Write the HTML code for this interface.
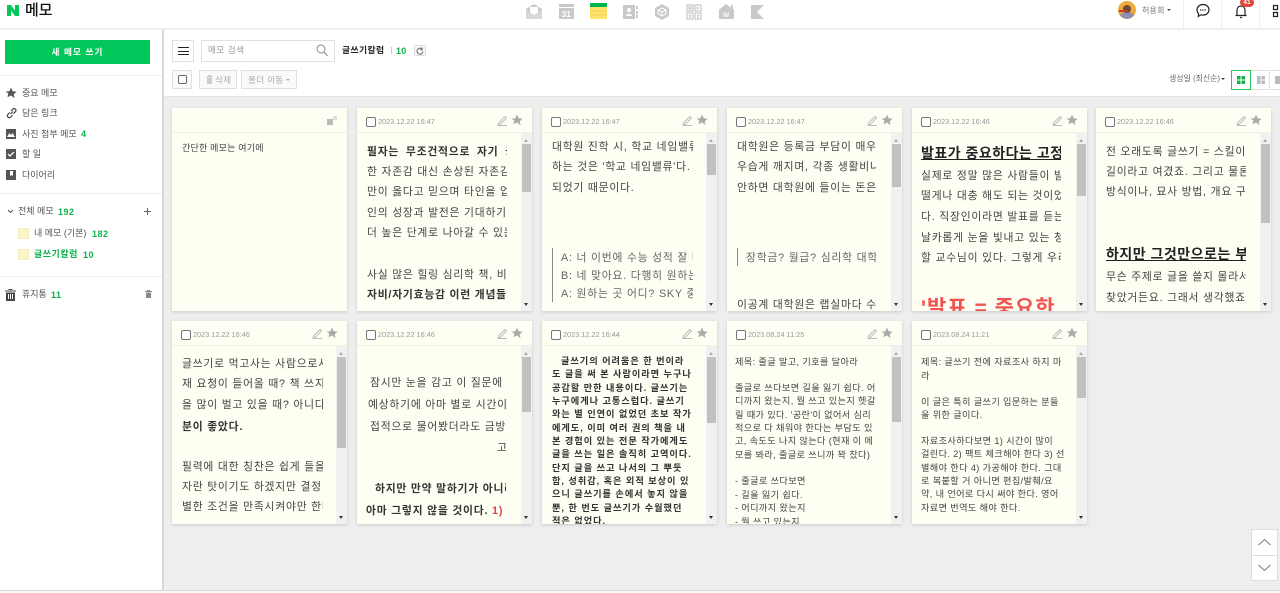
<!DOCTYPE html>
<html lang="ko"><head><meta charset="utf-8"><title>메모</title>
<style>
*{box-sizing:border-box}
html,body{margin:0;padding:0}
html{background:#eee}
body{width:1280px;height:593px;overflow:hidden;position:relative;background:#eee;font-family:"Liberation Sans","Noto Sans CJK KR",sans-serif;color:#444;filter:blur(.3px)}
.a{position:absolute;white-space:pre}
.g{color:#0cb24a;font-weight:700}
#hd{left:0;top:0;width:1280px;height:29px;background:#fff;border-bottom:1px solid #f0f0f5;box-shadow:0 1px 2px #eeeef4}
#side{left:0;top:30px;width:164px;height:560px;background:#fff;border-right:2px solid #d8d8d8}
#tb{left:164px;top:30px;width:1116px;height:67px;background:#fff;border-bottom:1px solid #e4e4e4}
.hr{position:absolute;left:0;width:162px;height:1px;background:#eee}
.it{font-size:9px;line-height:12px;color:#555;letter-spacing:0}
.btn{position:absolute;background:#fff;border:1px solid #e0e0e0}
.card{position:absolute;width:175px;height:203px;background:#fefef3;box-shadow:0 1px 3px rgba(0,0,0,.15);overflow:hidden}
.card .h{position:absolute;left:0;top:0;width:100%;height:25px;border-bottom:1px solid #f0f0e4}
.card .c{position:absolute;left:9px;top:9px;width:10px;height:10px;border:1px solid #777;border-radius:2px;background:#fff}
.card .d{position:absolute;left:21px;top:7px;font-size:7.3px;line-height:13px;color:#999;white-space:pre}
.card svg.p{position:absolute;left:140px;top:7px}
.card svg.s{position:absolute;left:154px;top:6px}
.sb{position:absolute;right:0;top:25px;width:11px;height:178px;background:#f1f1f1}
.sb i{position:absolute;left:1px;top:11px;width:9px;background:#c1c1c1}
.sb b{position:absolute;left:3px;width:0;height:0;border-left:2.5px solid transparent;border-right:2.5px solid transparent}
.sb .u{top:6px;border-bottom:3px solid #aaa}
.sb .n{bottom:5px;border-top:3px solid #333}
.t{position:absolute;top:25px;height:178px;overflow:hidden}
.t div{position:absolute;white-space:pre;line-height:14px;font-size:10.8px;letter-spacing:.78px;color:#444}
.t .bd{font-weight:700;color:#333}
.t .hh{font-size:14px;font-weight:700;letter-spacing:.5px;color:#222;text-decoration:underline;line-height:18px}
.t .q{color:#666}
.sm div{font-size:9.2px;letter-spacing:.35px;color:#444}
.sm9 div{font-size:9.2px;letter-spacing:.95px}
.bar{position:absolute;width:1px;background:#888}
</style></head><body>

<div class="a" id="hd"></div>
<div class="a" id="side"></div>
<div class="a" id="tb"></div>

<!-- logo -->
<svg class="a" style="left:6px;top:4px" width="14" height="13" viewBox="0 0 14 13"><path fill="#03c75a" d="M1 1h4l4 5.5V1h4v11H9L5 6.5V12H1z"/></svg>
<div class="a" style="left:25px;top:1px;font-size:15px;line-height:20px;color:#111;font-weight:500">메모</div>

<!-- app icons -->
<svg class="a" style="left:526px;top:2px" width="240" height="18" viewBox="0 0 240 18">
<path fill="#c9c9c9" d="M0 7l8-5 8 5v10H0z"/><path fill="#fff" d="M4 5h8v6l-4 2-4-2z"/><path fill="#d8d8d8" d="M0 8l8 5 8-5v9H0z"/>
<rect x="33" y="2" width="15" height="15" fill="#c9c9c9"/><rect x="33" y="5" width="15" height="1" fill="#fff"/><text x="35.500" y="15" font-size="8.500" font-weight="700" fill="#fff" font-family="Liberation Sans">31</text>
<rect x="64" y="1" width="17" height="4" fill="#03b54c"/><rect x="64" y="5" width="17" height="12" fill="#fde36b"/><path stroke="#f6d24c" d="M64 9h17M64 13h17"/>
<rect x="97" y="3" width="12" height="14" fill="#c9c9c9"/><circle cx="103" cy="8" r="2" fill="#fff"/><path fill="#fff" d="M100 14c0-3 6-3 6 0z"/><path fill="#c9c9c9" d="M110 4h2v3h-2zM110 9h2v3h-2zM110 13h2v3h-2z"/>
<path fill="#c9c9c9" d="M136 2l7 4v8l-7 4-7-4V6z"/><path fill="none" stroke="#fff" d="M136 6l4 2v4l-4 2-4-2V8zM132 8l4 2 4-2M136 10v4"/>
<path fill="none" stroke="#c9c9c9" stroke-width="1.200" d="M161 3h6v6h-6zM169 3h6v6h-6zM161 11h6v6h-6zM169 11h6v6h-6zM163 13.500h2M163 15h2M171 13.500h2M171 15h2"/><path fill="#c9c9c9" d="M170.500 4.500l3 1.500-3 1.500zM162.500 4.500h3v3h-3z"/>
<path fill="#c9c9c9" d="M200 2l5 3.500V3h2v4l1 .7V17h-15V7.700z"/><text x="197" y="15" font-size="6.500" font-weight="700" fill="#fff" font-family="Liberation Sans">W</text>
<path fill="#c9c9c9" d="M225 3h13l-7 7 7 7h-13z"/>
</svg>

<!-- user -->
<svg class="a" style="left:1118px;top:1px" width="18" height="18" viewBox="0 0 18 18"><circle cx="9" cy="9" r="9" fill="#f0a93c"/><path fill="#8f8fb0" d="M2 14c2-4 12-4 14 0-3 5-11 5-14 0z"/><circle cx="9" cy="8" r="4" fill="#6e4a3a"/><rect x="1" y="9" width="9" height="2" fill="#c63a2a"/></svg>
<div class="a" style="left:1142px;top:4px;font-size:8px;line-height:13px;color:#777;letter-spacing:.2px">허용회</div>
<div class="a" style="left:1167px;top:9px;width:0;height:0;border-left:2px solid transparent;border-right:2px solid transparent;border-top:2.5px solid #444"></div>
<div class="a" style="left:1183px;top:0;width:1px;height:28px;background:#eee"></div>
<div class="a" style="left:1221px;top:0;width:1px;height:28px;background:#eee"></div>
<div class="a" style="left:1259px;top:0;width:1px;height:28px;background:#eee"></div>
<svg class="a" style="left:1195px;top:3px" width="16" height="15" viewBox="0 0 16 15"><path fill="none" stroke="#222" stroke-width="1.200" d="M8 1.500c3.500 0 6 2.300 6 5.300s-2.500 5.300-6 5.300c-.7 0-1.400-.1-2-.3L3.300 13.500l.3-2.800C2.500 9.700 2 8.400 2 6.800c0-3 2.500-5.300 6-5.300z"/><path stroke="#222" stroke-width="1.300" stroke-dasharray="1.300 1" d="M5 7h6.500"/></svg>
<svg class="a" style="left:1234px;top:4px" width="14" height="15" viewBox="0 0 14 15"><path fill="none" stroke="#222" stroke-width="1.200" d="M3 11V6.500C3 3.500 4.700 2 7 2s4 1.500 4 4.500V11M1.500 11.500h11M6 13.500h2"/></svg>
<div class="a" style="left:1240px;top:-2px;width:14px;height:9px;border-radius:5px;background:#e0463a;color:#fff;font-size:6.500px;line-height:9px;text-align:center;font-weight:700">41</div>
<svg class="a" style="left:1272px;top:4px" width="8" height="14" viewBox="0 0 8 14"><path fill="none" stroke="#222" stroke-width="1.200" d="M1.500 1.500h4v4h-4zM1.500 8.500h4v4h-4z"/></svg>

<!-- sidebar -->
<div class="a" style="left:5px;top:40px;width:145px;height:24px;background:#03c75a;color:#fff;font-size:8.600px;font-weight:700;line-height:25px;text-align:center;letter-spacing:1.100px">새 메모 쓰기</div>
<div class="hr" style="top:75px"></div>

<svg class="a" style="left:5px;top:87px" width="12" height="12" viewBox="0 0 12 12"><path fill="#555" d="M6 .6l1.700 3.600 3.900.5-2.900 2.700.8 3.900L6 8.400 2.500 10.300l.8-3.900L.4 4.700l3.900-.5z"/></svg>
<div class="a it" style="left:22px;top:87px">중요 메모</div>
<svg class="a" style="left:6px;top:107px" width="11" height="12" viewBox="0 0 11 12"><path fill="none" stroke="#444" stroke-width="1.200" d="M4.500 7L7 4.500M3.800 5.500L2 7.300c-1 1-1 2 0 2.800s1.800.8 2.700-.1L6.500 8.200M5 4l1.800-1.800c.9-.9 1.800-.9 2.600-.1s.8 1.800-.1 2.700L7.500 6.600"/></svg>
<div class="a it" style="left:22px;top:107px">담은 링크</div>
<svg class="a" style="left:6px;top:129px" width="10" height="10" viewBox="0 0 10 10"><rect width="10" height="10" fill="#555"/><path fill="#fff" d="M1 8l2.500-4L5 6l1.500-2L9 8z"/></svg>
<div class="a it" style="left:22px;top:128px">사진 첨부 메모</div>
<div class="a g" style="left:81px;top:128px;font-size:9px;line-height:12px">4</div>
<svg class="a" style="left:6px;top:149px" width="10" height="10" viewBox="0 0 10 10"><rect width="10" height="10" fill="#555"/><path fill="none" stroke="#fff" stroke-width="1.300" d="M2 5l2 2 4-4"/></svg>
<div class="a it" style="left:22px;top:148px">할 일</div>
<svg class="a" style="left:6px;top:170px" width="10" height="10" viewBox="0 0 10 10"><rect width="10" height="10" fill="#555"/><path fill="#fff" d="M4 1h3v5L5.500 5 4 6z"/></svg>
<div class="a it" style="left:22px;top:169px">다이어리</div>
<div class="hr" style="top:193px"></div>

<svg class="a" style="left:7px;top:209px" width="7" height="5" viewBox="0 0 7 5"><path fill="none" stroke="#555" d="M1 1l2.500 2.500L6 1"/></svg>
<div class="a it" style="left:18px;top:205px">전체 메모</div>
<div class="a g" style="left:58px;top:206px;font-size:9px;line-height:12px;letter-spacing:.5px">192</div>
<div class="a" style="left:144px;top:211px;width:7px;height:1px;background:#666"></div>
<div class="a" style="left:147px;top:208px;width:1px;height:7px;background:#666"></div>
<div class="a" style="left:18px;top:228px;width:11px;height:11px;background:#fdf6c4;border:1px solid #f4ecc0"></div>
<div class="a it" style="left:34px;top:227px">내 메모 (기본)</div>
<div class="a g" style="left:92px;top:228px;font-size:9px;line-height:12px;letter-spacing:.5px">182</div>
<div class="a" style="left:18px;top:249px;width:11px;height:11px;background:#fdf6c4;border:1px solid #f4ecc0"></div>
<div class="a g" style="left:34px;top:248px;font-size:9px;line-height:12px;letter-spacing:.5px">글쓰기칼럼</div>
<div class="a g" style="left:83px;top:249px;font-size:9px;line-height:12px;letter-spacing:.5px">10</div>
<div class="hr" style="top:276px"></div>
<svg class="a" style="left:5px;top:289px" width="11" height="12" viewBox="0 0 11 12"><path fill="#444" d="M0 1.500h11v1H0zM3.500 0h4v1h-4zM1 3.500h9V12H1z"/><path stroke="#fff" d="M3.500 5v5M5.500 5v5M7.500 5v5"/></svg>
<div class="a it" style="left:22px;top:288px">휴지통</div>
<div class="a g" style="left:51px;top:289px;font-size:9px;line-height:12px;letter-spacing:.5px">11</div>
<svg class="a" style="left:145px;top:290px" width="7" height="8" viewBox="0 0 7 8"><path fill="#888" d="M0 1h7v1H0zM2 0h3v1H2zM1 2.500h5V8H1z"/></svg>

<!-- toolbar -->
<div class="btn" style="left:172px;top:40px;width:22px;height:22px"><div style="position:absolute;left:5px;top:6px;width:11px;height:8px;border-top:1px solid #222;border-bottom:1px solid #222"></div><div style="position:absolute;left:5px;top:9.500px;width:11px;height:1px;background:#222"></div></div>
<div class="btn" style="left:201px;top:40px;width:134px;height:22px"></div>
<div class="a" style="left:208px;top:44px;font-size:8.600px;line-height:12px;color:#999;letter-spacing:.5px">메모 검색</div>
<svg class="a" style="left:316px;top:44px" width="12" height="13" viewBox="0 0 12 13"><circle cx="5" cy="5" r="4" fill="none" stroke="#888"/><path stroke="#888" d="M8 8l3.500 4"/></svg>
<div class="a" style="left:342px;top:44px;font-size:8.800px;line-height:12px;color:#222;font-weight:700;letter-spacing:.4px">글쓰기칼럼</div>
<div class="a" style="left:391px;top:47px;width:1px;height:7px;background:#ccc"></div>
<div class="a g" style="left:396px;top:45px;font-size:9px;line-height:12px;letter-spacing:.3px">10</div>
<div class="btn" style="left:414px;top:45px;width:12px;height:11px;background:#f6f6f6"></div>
<svg class="a" style="left:416px;top:47px" width="8" height="8" viewBox="0 0 8 8"><path fill="none" stroke="#666" d="M6.500 2.500A3 3 0 1 0 7 4.500M6 .5v2.200H4"/></svg>

<div class="btn" style="left:172px;top:70px;width:20px;height:19px;background:#fafafa"><div style="position:absolute;left:5px;top:4px;width:9px;height:9px;border:1px solid #666;border-radius:2px;background:#fff"></div></div>
<div class="btn" style="left:199px;top:70px;width:38px;height:19px;background:#fafafa"></div>
<svg class="a" style="left:206px;top:75px" width="7" height="9" viewBox="0 0 7 9"><path fill="#ccc" d="M0 1h7v1H0zM2 0h3v1H2zM1 2.500h5V9H1z"/></svg>
<div class="a" style="left:215px;top:74px;font-size:8.600px;line-height:12px;color:#aaa;letter-spacing:.3px">삭제</div>
<div class="btn" style="left:241px;top:70px;width:56px;height:19px;background:#fafafa"></div>
<div class="a" style="left:248px;top:74px;font-size:8.600px;line-height:12px;color:#aaa;letter-spacing:.3px">폴더 이동</div>
<div class="a" style="left:286px;top:79px;width:0;height:0;border-left:2px solid transparent;border-right:2px solid transparent;border-top:2.500px solid #aaa"></div>

<div class="a" style="left:1169px;top:73px;font-size:7.900px;line-height:12px;color:#666">생성일 (최신순)</div>
<div class="a" style="left:1221px;top:78px;width:0;height:0;border-left:2px solid transparent;border-right:2px solid transparent;border-top:2.500px solid #444"></div>
<div class="btn" style="left:1250px;top:70px;width:20px;height:20px"></div>
<div class="btn" style="left:1269px;top:70px;width:20px;height:20px"></div>
<div class="btn" style="left:1231px;top:70px;width:20px;height:20px;border-color:#2ec45f"></div>
<svg class="a" style="left:1236px;top:75px" width="10" height="10" viewBox="0 0 10 10"><path fill="#0cb24a" d="M1 1h3.500v3.500H1zM5.500 1H9v3.500H5.500zM1 5.500h3.500V9H1zM5.500 5.500H9V9H5.500z"/></svg>
<svg class="a" style="left:1256px;top:75px" width="10" height="10" viewBox="0 0 10 10"><path fill="#bbb" d="M1 1h3.500v8H1zM5.500 1H9v3.500H5.500zM5.500 5.500H9V9H5.500z"/></svg>
<svg class="a" style="left:1275px;top:75px" width="5" height="10" viewBox="0 0 5 10"><path fill="#bbb" d="M0 1h5v8H0z"/></svg>

<!-- Row 1 -->
<div class="card" style="left:172px;top:108px">
 <div class="h"></div>
 <svg style="position:absolute;left:155px;top:8px" width="10" height="9" viewBox="0 0 10 9"><path fill="#bbb" d="M0 3h6v6H0z"/><path fill="#ddd" d="M6 0h4v4H6z"/></svg>
 <div class="t sm" style="left:10px;width:155px"><div style="top:8px;letter-spacing:.2px;font-size:9px">간단한 메모는 여기에</div></div>
</div>

<div class="card" style="left:357px;top:108px"><div class="h"><span class="c"></span><span class="d">2023.12.22 16:47</span></div>
 <svg class="p" width="11" height="11" viewBox="0 0 11 11"><path fill="none" stroke="#bbb" d="M1.500 8L8 1.500l1.500 1.500L3 9.500l-2 .5zM1 10.500h9"/></svg><svg class="s" width="12" height="12" viewBox="0 0 12 12"><path fill="#aaa" d="M6 .6l1.700 3.600 3.900.5-2.900 2.700.8 3.900L6 8.400 2.500 10.300l.8-3.900L.4 4.700l3.900-.5z"/></svg>
 <div class="t" style="left:10px;width:140px">
  <div class="bd" style="top:12px;word-spacing:3px">필자는 무조건적으로 자기 긍정을</div>
  <div style="top:32px">한 자존감 대신 손상된 자존감을</div>
  <div style="top:52px">만이 옳다고 믿으며 타인을 업신</div>
  <div style="top:73px">인의 성장과 발전은 기대하기 어</div>
  <div style="top:93px">더 높은 단계로 나아갈 수 있는</div>
  <div style="top:135px">사실 많은 힐링 심리학 책, 비지</div>
  <div class="bd" style="top:155px">자비/자기효능감 이런 개념들은</div>
 </div>
 <div class="sb"><b class="u"></b><i style="height:48px"></i><b class="n"></b></div>
</div>

<div class="card" style="left:542px;top:108px"><div class="h"><span class="c"></span><span class="d">2023.12.22 16:47</span></div>
 <svg class="p" width="11" height="11" viewBox="0 0 11 11"><path fill="none" stroke="#bbb" d="M1.500 8L8 1.500l1.500 1.500L3 9.500l-2 .5zM1 10.500h9"/></svg><svg class="s" width="12" height="12" viewBox="0 0 12 12"><path fill="#aaa" d="M6 .6l1.700 3.600 3.900.5-2.900 2.700.8 3.900L6 8.400 2.500 10.300l.8-3.900L.4 4.700l3.900-.5z"/></svg>
 <div class="t" style="left:10px;width:141px">
  <div style="top:7px">대학원 진학 시, 학교 네임밸류를</div>
  <div style="top:27px">하는 것은 '학교 네임밸류'다.</div>
  <div style="top:48px">되었기 때문이다.</div>
  <span class="bar" style="left:0;top:115px;height:54px"></span>
  <div class="q" style="left:9px;top:118px">A: 너 이번에 수능 성적 잘 나</div>
  <div class="q" style="left:9px;top:136px">B: 네 맞아요. 다행히 원하는</div>
  <div class="q" style="left:9px;top:154px">A: 원하는 곳 어디? SKY 중</div>
 </div>
 <div class="sb"><b class="u"></b><i style="height:31px"></i><b class="n"></b></div>
</div>

<div class="card" style="left:727px;top:108px"><div class="h"><span class="c"></span><span class="d">2023.12.22 16:47</span></div>
 <svg class="p" width="11" height="11" viewBox="0 0 11 11"><path fill="none" stroke="#bbb" d="M1.500 8L8 1.500l1.500 1.500L3 9.500l-2 .5zM1 10.500h9"/></svg><svg class="s" width="12" height="12" viewBox="0 0 12 12"><path fill="#aaa" d="M6 .6l1.700 3.600 3.900.5-2.900 2.700.8 3.900L6 8.400 2.500 10.300l.8-3.900L.4 4.700l3.900-.5z"/></svg>
 <div class="t" style="left:10px;width:139px">
  <div style="top:7px">대학원은 등록금 부담이 매우</div>
  <div style="top:27px">우습게 깨지며, 각종 생활비나</div>
  <div style="top:48px">안하면 대학원에 들이는 돈은</div>
  <span class="bar" style="left:0;top:115px;height:18px"></span>
  <div class="q" style="left:9px;top:118px">장학금? 월급? 심리학 대학원</div>
  <div style="top:165px">이공계 대학원은 랩실마다 수</div>
 </div>
 <div class="sb"><b class="u"></b><i style="height:43px"></i><b class="n"></b></div>
</div>

<div class="card" style="left:912px;top:108px"><div class="h"><span class="c"></span><span class="d">2023.12.22 16:46</span></div>
 <svg class="p" width="11" height="11" viewBox="0 0 11 11"><path fill="none" stroke="#bbb" d="M1.500 8L8 1.500l1.500 1.500L3 9.500l-2 .5zM1 10.500h9"/></svg><svg class="s" width="12" height="12" viewBox="0 0 12 12"><path fill="#aaa" d="M6 .6l1.700 3.600 3.900.5-2.900 2.700.8 3.900L6 8.400 2.500 10.300l.8-3.900L.4 4.700l3.900-.5z"/></svg>
 <div class="t" style="left:9px;width:140px">
  <div class="hh" style="top:11px">발표가 중요하다는 고정관념</div>
  <div style="top:36px">실제로 정말 많은 사람들이 발</div>
  <div style="top:56px">떨게나 대충 해도 되는 것이었</div>
  <div style="top:77px">다. 직장인이라면 발표를 듣는</div>
  <div style="top:98px">날카롭게 눈을 빛내고 있는 청</div>
  <div style="top:118px">할 교수님이 있다. 그렇게 우리</div>
  <div style="top:161px;font-size:21px;font-weight:700;color:#f25350;line-height:30px;letter-spacing:1px">'발표 = 중요한</div>
 </div>
 <div class="sb"><b class="u"></b><i style="height:52px"></i><b class="n"></b></div>
</div>

<div class="card" style="left:1096px;top:108px"><div class="h"><span class="c"></span><span class="d">2023.12.22 16:46</span></div>
 <svg class="p" width="11" height="11" viewBox="0 0 11 11"><path fill="none" stroke="#bbb" d="M1.500 8L8 1.500l1.500 1.500L3 9.500l-2 .5zM1 10.500h9"/></svg><svg class="s" width="12" height="12" viewBox="0 0 12 12"><path fill="#aaa" d="M6 .6l1.700 3.600 3.900.5-2.900 2.700.8 3.900L6 8.400 2.500 10.300l.8-3.900L.4 4.700l3.900-.5z"/></svg>
 <div class="t" style="left:10px;width:140px">
  <div style="top:12px">전 오래도록 글쓰기 = 스킬이</div>
  <div style="top:32px">길이라고 여겼죠. 그리고 물론</div>
  <div style="top:52px">방식이나, 묘사 방법, 개요 구성</div>
  <div class="hh" style="top:112px">하지만 그것만으로는 부족</div>
  <div style="top:137px">무슨 주제로 글을 쓸지 몰라서</div>
  <div style="top:158px">찾았거든요. 그래서 생각했죠.</div>
 </div>
 <div class="sb"><b class="u"></b><i style="height:79px"></i><b class="n"></b></div>
</div>

<!-- Row 2 -->
<div class="card" style="left:172px;top:321px"><div class="h"><span class="c"></span><span class="d">2023.12.22 16:46</span></div>
 <svg class="p" width="11" height="11" viewBox="0 0 11 11"><path fill="none" stroke="#bbb" d="M1.500 8L8 1.500l1.500 1.500L3 9.500l-2 .5zM1 10.500h9"/></svg><svg class="s" width="12" height="12" viewBox="0 0 12 12"><path fill="#aaa" d="M6 .6l1.700 3.600 3.900.5-2.900 2.700.8 3.900L6 8.400 2.500 10.300l.8-3.900L.4 4.700l3.900-.5z"/></svg>
 <div class="t" style="left:10px;width:141px">
  <div style="top:11px">글쓰기로 먹고사는 사람으로서</div>
  <div style="top:31px">재 요청이 들어올 때? 책 쓰지</div>
  <div style="top:52px">을 많이 벌고 있을 때? 아니다</div>
  <div class="bd" style="top:74px">분이 좋았다.</div>
  <div style="top:114px">필력에 대한 칭찬은 쉽게 들을</div>
  <div style="top:134px">자란 탓이기도 하겠지만 결정</div>
  <div style="top:154px">별한 조건을 만족시켜야만 한다</div>
 </div>
 <div class="sb"><b class="u"></b><i style="height:91px"></i><b class="n"></b></div>
</div>

<div class="card" style="left:357px;top:321px"><div class="h"><span class="c"></span><span class="d">2023.12.22 16:46</span></div>
 <svg class="p" width="11" height="11" viewBox="0 0 11 11"><path fill="none" stroke="#bbb" d="M1.500 8L8 1.500l1.500 1.500L3 9.500l-2 .5zM1 10.500h9"/></svg><svg class="s" width="12" height="12" viewBox="0 0 12 12"><path fill="#aaa" d="M6 .6l1.700 3.600 3.900.5-2.900 2.700.8 3.900L6 8.400 2.500 10.300l.8-3.900L.4 4.700l3.900-.5z"/></svg>
 <div class="t" style="left:9px;width:140px">
  <div style="left:4px;top:30px">잠시만 눈을 감고 이 질문에</div>
  <div style="left:2px;top:52px">예상하기에 아마 별로 시간이</div>
  <div style="left:4px;top:74px">접적으로 물어봤더라도 금방</div>
  <div style="left:131px;top:95px">고</div>
  <div class="bd" style="left:9px;top:136px">하지만 만약 말하기가 아니라</div>
  <div class="bd" style="left:0;top:158px">아마 그렇지 않을 것이다. <span style="color:#e04040">1) 글</span></div>
 </div>
 <div class="sb"><b class="u"></b><i style="height:55px"></i><b class="n"></b></div>
</div>

<div class="card" style="left:542px;top:321px"><div class="h"><span class="c"></span><span class="d">2023.12.22 16:44</span></div>
 <svg class="p" width="11" height="11" viewBox="0 0 11 11"><path fill="none" stroke="#bbb" d="M1.500 8L8 1.500l1.500 1.500L3 9.500l-2 .5zM1 10.500h9"/></svg><svg class="s" width="12" height="12" viewBox="0 0 12 12"><path fill="#aaa" d="M6 .6l1.700 3.600 3.900.5-2.900 2.700.8 3.900L6 8.400 2.500 10.300l.8-3.900L.4 4.700l3.900-.5z"/></svg>
 <div class="t sm9" style="left:10px;width:150px">
  <div class="bd" style="left:9px;top:8px">글쓰기의 어려움은 한 번이라</div>
  <div class="bd" style="top:21px">도 글을 써 본 사람이라면 누구나</div>
  <div class="bd" style="top:35px">공감할 만한 내용이다. 글쓰기는</div>
  <div class="bd" style="top:48px">누구에게나 고통스럽다. 글쓰기</div>
  <div class="bd" style="top:61px">와는 별 인연이 없었던 초보 작가</div>
  <div class="bd" style="top:75px">에게도, 이미 여러 권의 책을 내</div>
  <div class="bd" style="top:88px">본 경험이 있는 전문 작가에게도</div>
  <div class="bd" style="top:101px">글을 쓰는 일은 솔직히 고역이다.</div>
  <div class="bd" style="top:115px">단지 글을 쓰고 나서의 그 뿌듯</div>
  <div class="bd" style="top:128px">함, 성취감, 혹은 외적 보상이 있</div>
  <div class="bd" style="top:141px">으니 글쓰기를 손에서 놓지 않을</div>
  <div class="bd" style="top:155px">뿐, 한 번도 글쓰기가 수월했던</div>
  <div class="bd" style="top:168px">적은 없었다.</div>
 </div>
 <div class="sb"><b class="u"></b><i style="height:66px"></i><b class="n"></b></div>
</div>

<div class="card" style="left:727px;top:321px"><div class="h"><span class="c"></span><span class="d">2023.08.24 11:25</span></div>
 <svg class="p" width="11" height="11" viewBox="0 0 11 11"><path fill="none" stroke="#bbb" d="M1.500 8L8 1.500l1.500 1.500L3 9.500l-2 .5zM1 10.500h9"/></svg><svg class="s" width="12" height="12" viewBox="0 0 12 12"><path fill="#aaa" d="M6 .6l1.700 3.600 3.900.5-2.900 2.700.8 3.900L6 8.400 2.500 10.300l.8-3.900L.4 4.700l3.900-.5z"/></svg>
 <div class="t sm" style="left:8px;width:152px">
  <div style="top:9px">제목: 줄글 말고, 기호를 달아라</div>
  <div style="top:35px">줄글로 쓰다보면 길을 잃기 쉽다. 어</div>
  <div style="top:48px">디까지 왔는지, 뭘 쓰고 있는지 헷갈</div>
  <div style="top:62px">릴 때가 있다. '공란'이 없어서 심리</div>
  <div style="top:75px">적으로 다 채워야 한다는 부담도 있</div>
  <div style="top:88px">고, 속도도 나지 않는다 (현재 이 메</div>
  <div style="top:102px">모를 봐라, 줄글로 쓰니까 꽉 찼다)</div>
  <div style="top:128px">- 줄글로 쓰다보면</div>
  <div style="top:142px">- 길을 잃기 쉽다.</div>
  <div style="top:155px">- 어디까지 왔는지</div>
  <div style="top:169px">- 뭘 쓰고 있는지</div>
 </div>
 <div class="sb"><b class="u"></b><i style="height:65px"></i><b class="n"></b></div>
</div>

<div class="card" style="left:912px;top:321px"><div class="h"><span class="c"></span><span class="d">2023.08.24 11:21</span></div>
 <svg class="p" width="11" height="11" viewBox="0 0 11 11"><path fill="none" stroke="#bbb" d="M1.500 8L8 1.500l1.500 1.500L3 9.500l-2 .5zM1 10.500h9"/></svg><svg class="s" width="12" height="12" viewBox="0 0 12 12"><path fill="#aaa" d="M6 .6l1.700 3.600 3.900.5-2.900 2.700.8 3.900L6 8.400 2.500 10.300l.8-3.900L.4 4.700l3.900-.5z"/></svg>
 <div class="t sm" style="left:9px;width:152px">
  <div style="top:9px">제목: 글쓰기 전에 자료조사 하지 마</div>
  <div style="top:23px">라</div>
  <div style="top:49px">이 글은 특히 글쓰기 입문하는 분들</div>
  <div style="top:62px">을 위한 글이다.</div>
  <div style="top:88px">자료조사하다보면 1) 시간이 많이</div>
  <div style="top:101px">걸린다. 2) 팩트 체크해야 한다 3) 선</div>
  <div style="top:115px">별해야 한다 4) 가공해야 한다. 그대</div>
  <div style="top:128px">로 복붙할 거 아니면 편집/발췌/요</div>
  <div style="top:141px">약, 내 언어로 다시 써야 한다. 영어</div>
  <div style="top:155px">자료면 번역도 해야 한다.</div>
 </div>
 <div class="sb"><b class="u"></b><i style="height:41px"></i><b class="n"></b></div>
</div>

<!-- scroll buttons -->
<div class="btn" style="left:1251px;top:529px;width:27px;height:27px;border:1px solid #ddd"></div>
<div class="btn" style="left:1251px;top:555px;width:27px;height:26px;border:1px solid #ddd"></div>
<svg class="a" style="left:1257px;top:538px" width="15" height="36" viewBox="0 0 15 36"><path fill="none" stroke="#777" d="M1.500 7L7.500 1.500 13.500 7M1.500 27l6 5.500 6-5.500"/></svg>
<div class="a" style="left:0;top:590px;width:1280px;height:1px;background:#d8d8d8"></div>
<div class="a" style="left:0;top:591px;width:1280px;height:2px;background:#f6f6f6"></div>
</body></html>
